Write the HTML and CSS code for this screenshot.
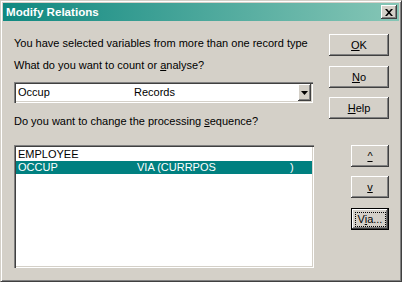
FILE: index.html
```html
<!DOCTYPE html>
<html>
<head>
<meta charset="utf-8">
<link rel="stylesheet" href="styles.css">
</head>
<body>
<div class="window">
  <div class="titlebar">
    <span class="title">Modify Relations</span>
    <button class="close" type="button"><svg width="8" height="7" viewBox="0 0 8 7"><path d="M0 0h2l2 2.2L6 0h2L5 3.5 8 7H6L4 4.8 2 7H0l3-3.5z" fill="#000"/></svg></button>
  </div>
  <div class="main">
    <div class="left">
      <p class="msg msg1">You have selected variables from more than one record type</p>
      <p class="msg msg2">What do you want to count or <u>a</u>nalyse?</p>
      <div class="combo">
        <div class="combo-text"><span class="c1">Occup</span><span>Records</span></div>
        <div class="combo-btn"><svg width="7" height="4" viewBox="0 0 7 4"><path d="M0 0h7L3.5 4z" fill="#000"/></svg></div>
      </div>
      <p class="msg msg3">Do you want to change the processing <u>s</u>equence?</p>
      <div class="listbox">
        <div class="row"><span class="c1">EMPLOYEE</span></div>
        <div class="row sel"><span class="c1">OCCUP</span><span class="c2">VIA (CURRPOS</span><span>)</span></div>
      </div>
    </div>
    <div class="right">
      <button class="btn wide ok" type="button"><u>O</u>K</button>
      <button class="btn wide no" type="button"><u>N</u>o</button>
      <button class="btn wide help" type="button"><u>H</u>elp</button>
      <button class="btn narrow up" type="button"><u>^</u></button>
      <button class="btn narrow down" type="button"><u>v</u></button>
      <button class="btn narrow via default" type="button">V<u>i</u>a...</button>
    </div>
  </div>
</div>
</body>
</html>
```

FILE: styles.css
```css
* { box-sizing: border-box; }
html, body { margin: 0; padding: 0; }
body { background: #d4d0c8; font-family: "Liberation Sans", Arial, sans-serif; font-size: 11px; color: #000; }

.window {
  width: 402px;
  height: 282px;
  background: #d4d0c8;
  border: 1px solid;
  border-color: #d4d0c8 #404040 #404040 #d4d0c8;
  box-shadow: inset 1px 1px #fff, inset -1px -1px #808080;
  padding: 2px;
  display: flex;
  flex-direction: column;
}

.titlebar {
  height: 18px;
  background: linear-gradient(to right, #0f8880, #86c6b6);
  display: flex;
  align-items: center;
  justify-content: space-between;
  padding-left: 3px;
  padding-right: 2px;
}
.title {
  color: #fff;
  font-weight: bold;
  font-size: 11.6px;
  line-height: 14px;
}
.close {
  width: 16px;
  height: 14px;
  padding: 0;
  margin: 0;
  border: none;
  background: #d4d0c8;
  box-shadow: inset -1px -1px #404040, inset 1px 1px #fff, inset -2px -2px #808080;
  display: flex;
  align-items: center;
  justify-content: center;
}
.close svg { display: block; margin-left: -1px; }

.main {
  display: flex;
  padding-left: 11px;
  padding-right: 10px;
  flex: 1;
}
.left { width: 300px; display: flex; flex-direction: column; }
.right { width: 60px; margin-left: 15px; display: flex; flex-direction: column; align-items: flex-end; }

.msg { margin: 0; line-height: 13px; white-space: nowrap; }
.msg1 { margin-top: 16px; }
.msg2 { margin-top: 9px; }
.msg3 { margin-top: 12px; }
u { text-decoration: underline; text-underline-offset: 1px; }

.combo {
  margin-top: 10px;
  height: 21px;
  width: 299px;
  background: #fff;
  box-shadow: inset 1px 1px #808080, inset 2px 2px #404040, inset -1px -1px #fff, inset -2px -2px #d4d0c8;
  padding: 2px;
  display: flex;
}
.combo-text { flex: 1; display: flex; align-items: center; padding-left: 2px; line-height: 13px; }
.c1 { width: 116px; flex: none; }
.combo-btn {
  width: 13px;
  height: 17px;
  background: #d4d0c8;
  box-shadow: inset -1px -1px #404040, inset 1px 1px #fff, inset -2px -2px #808080;
  display: flex;
  align-items: center;
  justify-content: center;
}
.combo-btn svg { display: block; }

.listbox {
  margin-top: 17px;
  height: 123px;
  width: 300px;
  background: #fff;
  box-shadow: inset 1px 1px #808080, inset 2px 2px #404040, inset -1px -1px #fff, inset -2px -2px #d4d0c8;
  padding: 3px 2px 2px 2px;
}
.row { height: 13px; line-height: 13px; display: flex; padding-left: 2px; white-space: nowrap; }
.row .c1 { width: 119px; }
.row .c2 { width: 153px; flex: none; }
.sel { background: #008080; color: #fff; }

.btn {
  height: 22px;
  padding: 0;
  margin: 0;
  border: none;
  background: #d4d0c8;
  font-family: "Liberation Sans", Arial, sans-serif;
  font-size: 11px;
  color: #000;
  line-height: 13px;
  box-shadow: inset -1px -1px #404040, inset 1px 1px #fff, inset -2px -2px #808080;
  position: relative;
}
.wide { width: 60px; }
.narrow { width: 38px; }
.ok { margin-top: 13px; }
.no { margin-top: 10px; }
.help { margin-top: 9px; }
.up { margin-top: 26px; }
.down { margin-top: 9px; }
.via { margin-top: 10px; }
.default {
  border: 1px solid #000;
  box-shadow: inset -1px -1px #404040, inset 1px 1px #fff, inset -2px -2px #808080;
}
.default::after {
  content: "";
  position: absolute;
  left: 3px;
  top: 3px;
  right: 2px;
  bottom: 2px;
  border: 1px dotted #000;
}
```
